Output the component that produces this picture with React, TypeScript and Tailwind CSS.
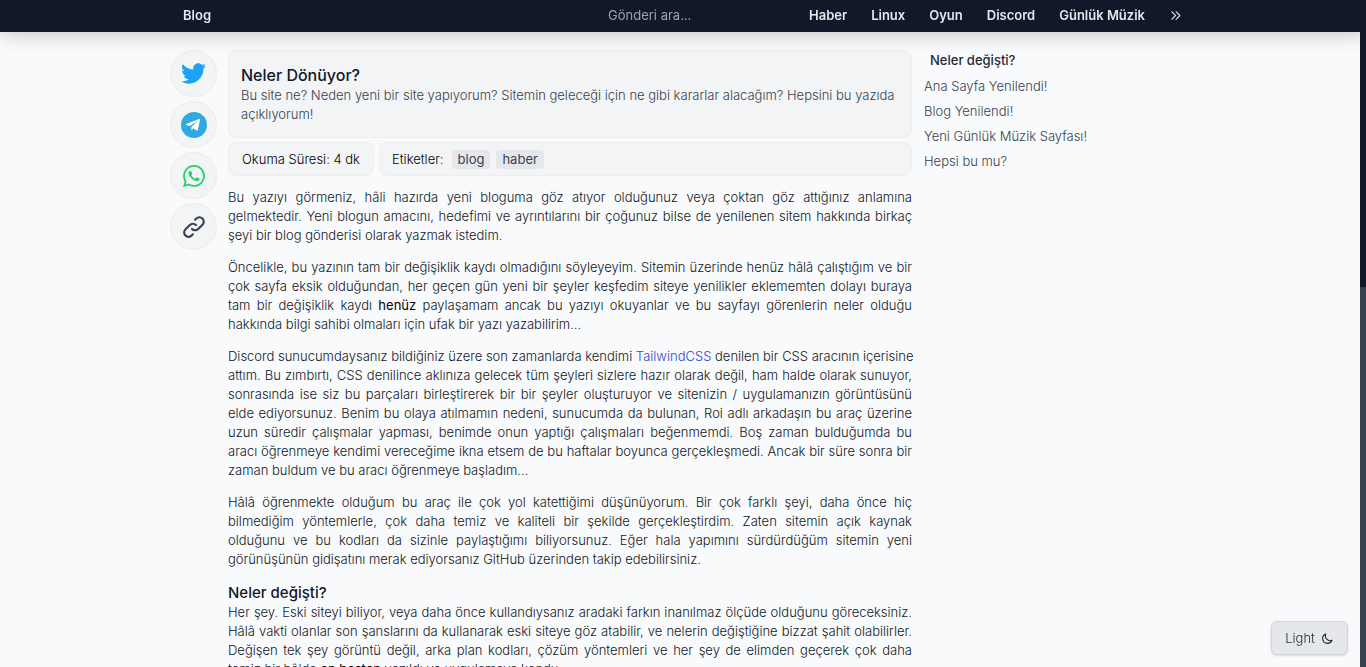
import React from "react";
import { FaTelegramPlane, FaTwitter } from "react-icons/fa";
import { SiWhatsapp } from "react-icons/si";
import { HiOutlineChevronDoubleRight, HiOutlineLink, HiOutlineMoon } from "react-icons/hi";

const navLinks = ["Haber", "Linux", "Oyun", "Discord", "Günlük Müzik"];
const tags = ["blog", "haber"];
const contents = ["Ana Sayfa Yenilendi!", "Blog Yenilendi!", "Yeni Günlük Müzik Sayfası!", "Hepsi bu mu?"];

const share = [
  { label: "Twitter", icon: <FaTwitter className="size-[25px] text-[#1da1f2]" /> },
  {
    label: "Telegram",
    icon: (
      <span className="flex size-[26px] items-center justify-center rounded-full bg-[#2fa9e0] pr-0.5">
        <FaTelegramPlane className="size-4 text-white" />
      </span>
    ),
  },
  { label: "WhatsApp", icon: <SiWhatsapp className="size-[22px] text-[#25d366]" /> },
  { label: "Bağlantı", icon: <HiOutlineLink className="size-[26px] text-[#374151]" /> },
];

function Header() {
  return (
    <header className="fixed inset-x-0 top-0 z-10 h-8 bg-[#111827] pr-1.5 shadow-[0_2px_20px_rgba(0,0,0,0.22)]">
      <div className="mx-auto flex h-full max-w-[1020px] items-center pr-2 pb-px pl-[13px] font-semibold text-[#e5e7eb]">
        <a href="#blog">Blog</a>
        <input
          type="search"
          aria-label="Gönderi ara"
          placeholder="Gönderi ara..."
          className="ml-auto w-[176px] bg-transparent font-normal outline-none placeholder:text-[#9ca3af]"
        />
        <nav className="ml-[25px] flex items-center gap-6">
          {navLinks.map((link) => (
            <a key={link} href="#nav" className="whitespace-nowrap">
              {link}
            </a>
          ))}
          <a href="#more" aria-label="Daha fazla">
            <HiOutlineChevronDoubleRight className="size-[13px]" />
          </a>
        </nav>
      </div>
    </header>
  );
}

function ShareBar() {
  return (
    <div className="flex shrink-0 flex-col gap-1">
      {share.map((s) => (
        <a
          key={s.label}
          href="#share"
          aria-label={s.label}
          className="flex size-[47px] items-center justify-center rounded-full border border-[#e9ebee] bg-[#f3f4f6]"
        >
          {s.icon}
        </a>
      ))}
    </div>
  );
}

function Article() {
  return (
    <main className="min-w-0 flex-1">
      <div className="rounded-lg border border-[#eceef0] bg-[#f3f4f6] px-3 py-[13px]">
        <h1 className="text-base leading-[22px] font-medium text-[#111827]">Neler Dönüyor?</h1>
        <p className="font-light text-[#374151]">
          Bu site ne? Neden yeni bir site yapıyorum? Sitemin geleceği için ne gibi kararlar alacağım? Hepsini bu yazıda
          açıklıyorum!
        </p>
      </div>

      <div className="mt-1 flex gap-[5px] font-light text-black">
        <div className="flex h-[34px] items-center rounded-lg border border-[#eceef0] bg-[#f3f4f6] px-[13px]">
          Okuma Süresi: 4 dk
        </div>
        <div className="flex h-[34px] flex-1 items-center gap-1.5 rounded-lg border border-[#eceef0] bg-[#f3f4f6] px-3">
          <span className="mr-0.5">Etiketler:</span>
          {tags.map((tag) => (
            <a key={tag} href="#tag" className="rounded-sm bg-[#e5e7eb] px-1.5 font-normal text-[#374151]">
              {tag}
            </a>
          ))}
        </div>
      </div>

      <div className="mt-3 space-y-[13px] text-justify font-light text-[#111827]">
        <p>
          Bu yazıyı görmeniz, hâli hazırda yeni bloguma göz atıyor olduğunuz veya çoktan göz attığınız anlamına
          gelmektedir. Yeni blogun amacını, hedefimi ve ayrıntılarını bir çoğunuz bilse de yenilenen sitem hakkında
          birkaç şeyi bir blog gönderisi olarak yazmak istedim.
        </p>
        <p>
          Öncelikle, bu yazının tam bir değişiklik kaydı olmadığını söyleyeyim. Sitemin üzerinde henüz hâlâ çalıştığım
          ve bir çok sayfa eksik olduğundan, her geçen gün yeni bir şeyler keşfedim siteye yenilikler eklememten dolayı
          buraya tam bir değişiklik kaydı <strong className="font-normal text-black">henüz</strong> paylaşamam ancak bu
          yazıyı okuyanlar ve bu sayfayı görenlerin neler olduğu hakkında bilgi sahibi olmaları için ufak bir yazı
          yazabilirim...
        </p>
        <p>
          <span className="whitespace-nowrap">
            Discord sunucumdaysanız bildiğiniz üzere son zamanlarda kendimi{" "}
            <a href="#tailwind" className="text-[#2f45d0]">TailwindCSS</a> denilen bir CSS aracının içerisine
          </span>{" "}
          attım. Bu zımbırtı, CSS denilince aklınıza gelecek tüm şeyleri sizlere hazır olarak değil, ham halde olarak
          sunuyor, sonrasında ise siz bu parçaları birleştirerek bir bir şeyler oluşturuyor ve sitenizin /
          uygulamanızın görüntüsünü elde ediyorsunuz. Benim bu olaya atılmamın nedeni, sunucumda da bulunan, Roi adlı
          arkadaşın bu araç üzerine uzun süredir çalışmalar yapması, benimde onun yaptığı çalışmaları beğenmemdi. Boş
          zaman bulduğumda bu aracı öğrenmeye kendimi vereceğime ikna etsem de bu haftalar boyunca gerçekleşmedi. Ancak
          bir süre sonra bir zaman buldum ve bu aracı öğrenmeye başladım...
        </p>
        <p>
          Hâlâ öğrenmekte olduğum bu araç ile çok yol katettiğimi düşünüyorum. Bir çok farklı şeyi, daha önce hiç
          bilmediğim yöntemlerle, çok daha temiz ve kaliteli bir şekilde gerçekleştirdim. Zaten sitemin açık kaynak
          olduğunu&nbsp;ve bu kodları da sizinle paylaştığımı biliyorsunuz. Eğer hala yapımını sürdürdüğüm sitemin yeni
          görünüşünün gidişatını merak ediyorsanız GitHub üzerinden takip edebilirsiniz.
        </p>
        <section>
          <h2 className="text-[15px] leading-[21px] font-medium text-[#111827]">Neler değişti?</h2>
          <p>
            Her şey. Eski siteyi biliyor, veya daha önce kullandıysanız aradaki farkın inanılmaz ölçüde olduğunu
            göreceksiniz. Hâlâ vakti olanlar son şanslarını da kullanarak eski siteye göz atabilir, ve nelerin
            değiştiğine bizzat şahit olabilirler. Değişen tek şey görüntü değil, arka plan kodları, çözüm yöntemleri ve
            her şey de elimden geçerek çok daha temiz bir hâlde{" "}
            <strong className="font-normal text-black">en baştan</strong> yazıldı ve uygulamaya kondu.
          </p>
        </section>
      </div>
    </main>
  );
}

function Contents() {
  return (
    <aside className="w-[267px] shrink-0 pt-px pl-px">
      <h2 className="pl-1.5 font-medium text-[#1f2937]">Neler değişti?</h2>
      <ul className="mt-[7px] space-y-1.5 font-light text-[#374151]">
        {contents.map((item) => (
          <li key={item}>
            <a href="#contents">{item}</a>
          </li>
        ))}
      </ul>
    </aside>
  );
}

export default function App() {
  return (
    <div className="h-screen overflow-y-auto bg-[#f9fafb] pr-1.5 font-['Inter','Liberation_Sans',sans-serif] text-[13px] leading-[19px] [scrollbar-width:none]">
      <Header />
      <div className="mx-auto flex max-w-[1020px] gap-[11px] pt-[50px]">
        <ShareBar />
        <Article />
        <Contents />
      </div>
      <button
        type="button"
        className="fixed right-[18px] bottom-3 flex h-[34px] items-center gap-1.5 rounded-md border border-[#d1d5db] bg-[#e5e7eb] px-[13px] font-light text-[#1f2937] shadow-sm"
      >
        Light
        <HiOutlineMoon className="size-[13px]" />
      </button>
      <div aria-hidden="true" className="fixed inset-y-0 right-0 z-20 w-1.5 bg-[#374151]">
        <div className="h-[43%] bg-[#111827]" />
      </div>
    </div>
  );
}
